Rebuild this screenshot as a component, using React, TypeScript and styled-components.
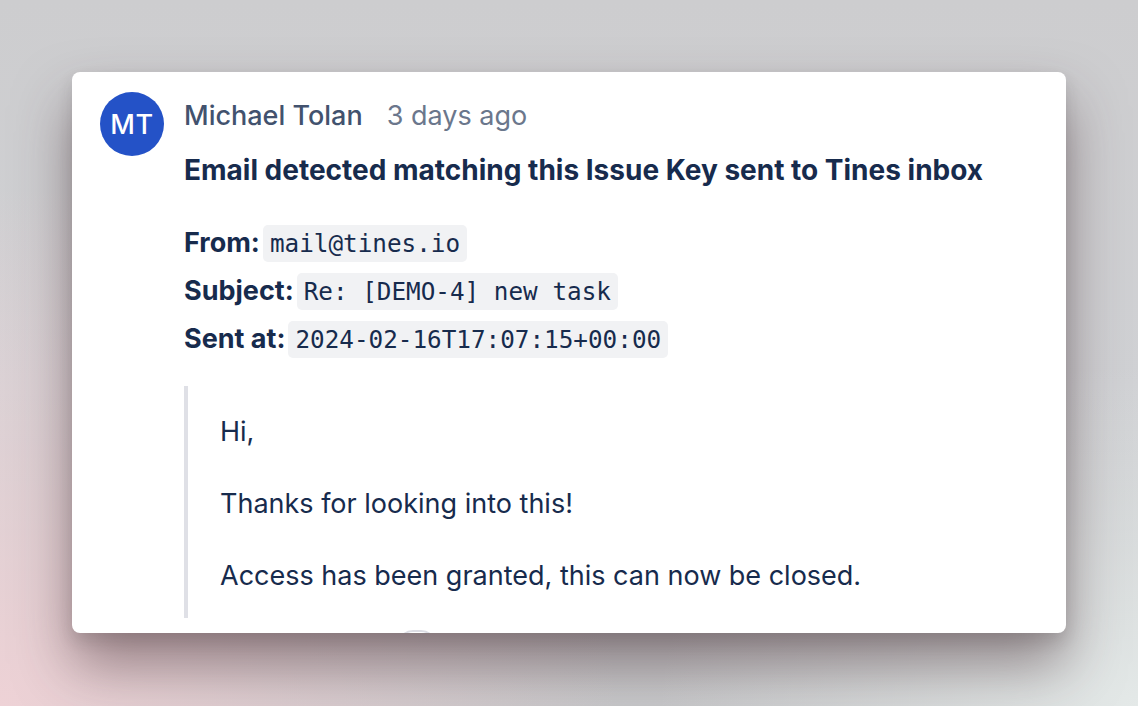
import styled, { createGlobalStyle } from "styled-components";

const GlobalStyle = createGlobalStyle`
  html, body {
    margin: 0;
    padding: 0;
  }

  body {
    width: 1138px;
    height: 706px;
    overflow: hidden;
    font-family: Inter, "Noto Sans", sans-serif;
    background:
      radial-gradient(ellipse 620px 520px at 0% 100%, rgba(238, 210, 214, 1), rgba(238, 210, 214, 0) 100%),
      radial-gradient(ellipse 480px 340px at 100% 100%, rgba(228, 233, 232, 1), rgba(228, 233, 232, 0) 100%),
      linear-gradient(180deg, #cdcdcf 0%, #d0d1d4 55%, #c8c9cb 100%);
  }
`;

interface MetaLine {
  label: string;
  value: string;
}

const metaLines: MetaLine[] = [
  { label: "From:", value: "mail@tines.io" },
  { label: "Subject:", value: "Re: [DEMO-4] new task" },
  { label: "Sent at:", value: "2024-02-16T17:07:15+00:00" },
];

const paragraphs = [
  "Hi,",
  "Thanks for looking into this!",
  "Access has been granted, this can now be closed.",
];

export default function App() {
  return (
    <>
      <GlobalStyle />
      <Page>
        <Card>
          <Avatar>MT</Avatar>
          <Content>
            <Header>
              <AuthorName>Michael Tolan</AuthorName>
              <TimeAgo>3 days ago</TimeAgo>
            </Header>
            <Title>Email detected matching this Issue Key sent to Tines inbox</Title>
            <MetaList>
              {metaLines.map((line) => (
                <MetaRow key={line.label}>
                  <MetaLabel>{line.label}</MetaLabel>
                  <Code>{line.value}</Code>
                </MetaRow>
              ))}
            </MetaList>
            <Quote>
              {paragraphs.map((text) => (
                <Paragraph key={text}>{text}</Paragraph>
              ))}
            </Quote>
            <Actions>
              <ReactionButton aria-label="Add reaction" />
            </Actions>
          </Content>
        </Card>
      </Page>
    </>
  );
}

const Page = styled.main`
  box-sizing: border-box;
  width: 1138px;
  height: 706px;
  padding: 72px 72px 0;
`;

const Card = styled.article`
  box-sizing: border-box;
  display: flex;
  gap: 20px;
  width: 994px;
  height: 561px;
  padding: 20px 28px 0;
  overflow: hidden;
  background: #ffffff;
  border-radius: 8px;
  box-shadow:
    0 32px 56px rgba(70, 45, 52, 0.5),
    0 8px 16px rgba(40, 40, 45, 0.14);
`;

const Avatar = styled.div`
  flex: none;
  display: flex;
  align-items: center;
  justify-content: center;
  width: 64px;
  height: 64px;
  border-radius: 50%;
  background: #2452c7;
  color: #ffffff;
  font-size: 27px;
  font-weight: 500;
  letter-spacing: 0.5px;
`;

const Content = styled.div`
  display: flex;
  flex-direction: column;
  min-width: 0;
  color: #172b4d;
  font-size: 27px;
  line-height: 48px;
`;

const Header = styled.div`
  display: flex;
  gap: 24px;
  align-items: baseline;
`;

const AuthorName = styled.span`
  color: #42526e;
  font-weight: 500;
`;

const TimeAgo = styled.span`
  color: #6b778c;
`;

const Title = styled.h2`
  margin: 6px 0 0;
  font-size: 28px;
  font-weight: 700;
  line-height: 48px;
`;

const MetaList = styled.div`
  display: flex;
  flex-direction: column;
  margin-top: 25px;
`;

const MetaRow = styled.div`
  display: flex;
  gap: 3px;
  align-items: center;
  height: 48px;
`;

const MetaLabel = styled.strong`
  font-weight: 700;
`;

const Code = styled.code`
  padding: 0 7px;
  border-radius: 5px;
  background: #f1f2f4;
  font-family: "DejaVu Sans Mono", "Liberation Mono", monospace;
  font-size: 24.3px;
  line-height: 37px;
  color: #172b4d;
`;

const Quote = styled.blockquote`
  display: flex;
  flex-direction: column;
  gap: 24px;
  margin: 23px 0 0;
  padding: 22px 0 18px 32px;
  border-left: 4px solid #dfe0e6;
`;

const Paragraph = styled.p`
  margin: 0;
`;

const Actions = styled.div`
  display: flex;
  margin-top: 12px;
  padding-left: 213px;
`;

const ReactionButton = styled.button`
  width: 40px;
  height: 32px;
  padding: 0;
  border: 2px solid #dcdde4;
  border-radius: 16px;
  background: #ffffff;
`;
